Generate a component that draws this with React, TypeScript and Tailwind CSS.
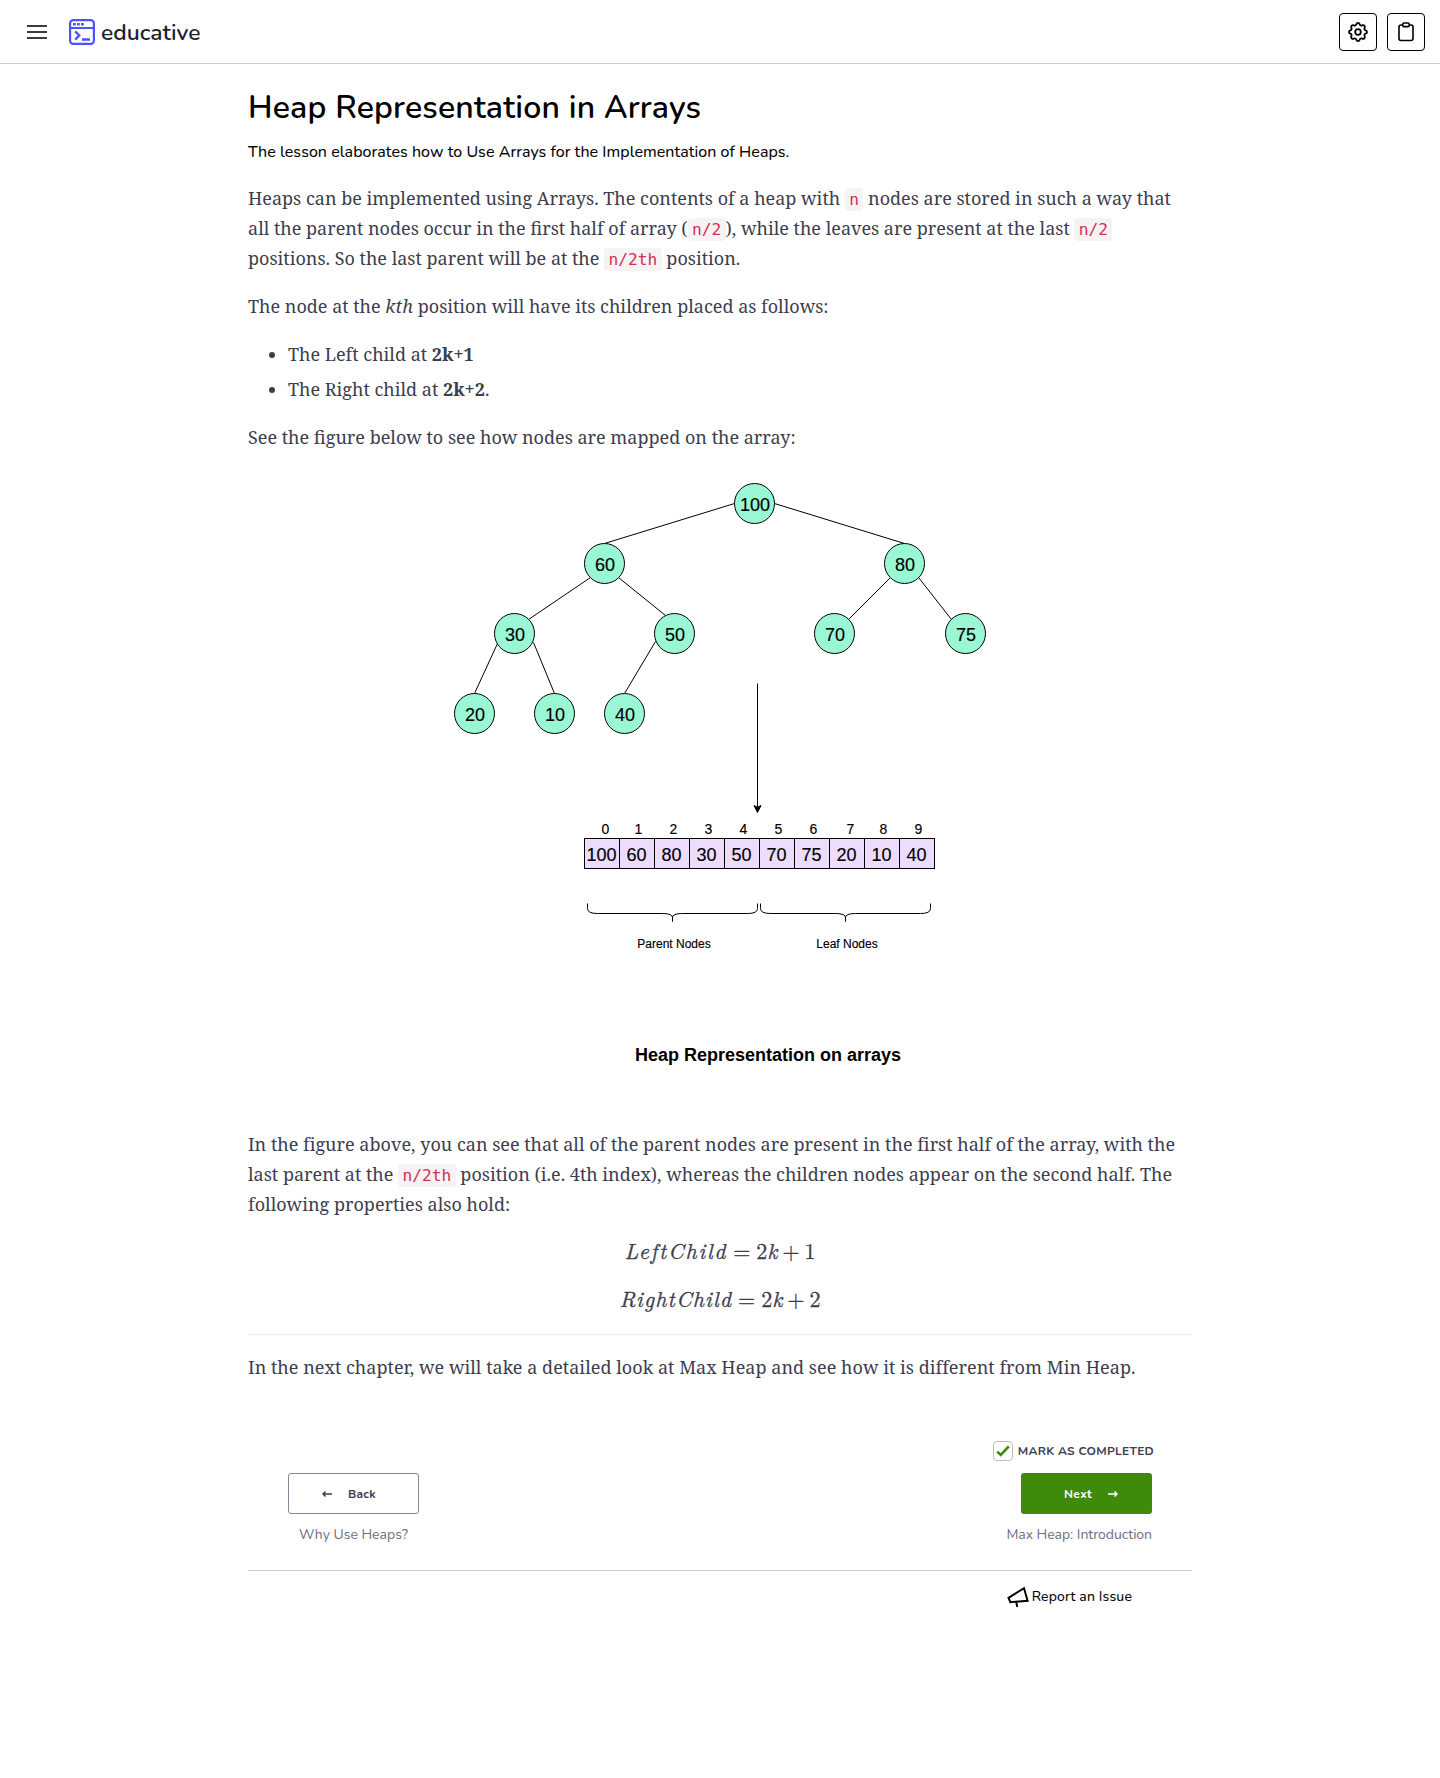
import React from "react";

const nodes: [string, number, number][] = [
  ["100", 754, 503],
  ["60", 604, 563],
  ["80", 904, 563],
  ["30", 514, 633],
  ["50", 674, 633],
  ["70", 834, 633],
  ["75", 965, 633],
  ["20", 474, 713],
  ["10", 554, 713],
  ["40", 624, 713],
];

const edges = [
  [734, 503, 604, 543],
  [774, 503, 904, 543],
  [590, 577, 528, 619],
  [618, 577, 665, 615],
  [890, 577, 848, 619],
  [918, 577, 951, 619],
  [497, 643, 474, 693],
  [533, 642, 554, 693],
  [655, 641, 624, 693],
];

const cells: [string, number][] = [
  ["100", 605],
  ["60", 638],
  ["80", 673],
  ["30", 708],
  ["50", 743],
  ["70", 778],
  ["75", 813],
  ["20", 850],
  ["10", 883],
  ["40", 918],
];

function Brace({ x }: { x: number }) {
  return (
    <path
      d={`M${x} 903v5q0 5 10 5h65q10 0 10 4v4v-4q0-4 10-4h65q10 0 10-5v-5`}
      fill="none"
      stroke="#000"
    />
  );
}

function HeapFigure() {
  return (
    <svg
      className="block h-[630px] w-[944px]"
      viewBox="248 470 944 630"
      fontFamily="'Liberation Sans', Arial, sans-serif"
      textAnchor="middle"
    >
      <g transform="translate(.5 .5)">
        {edges.map(([a, b, c, d], i) => (
          <line key={i} x1={a} y1={b} x2={c} y2={d} stroke="#000" />
        ))}
        {nodes.map(([label, x, y]) => (
          <g key={label}>
            <circle cx={x} cy={y} r="20" fill="#9af7d3" stroke="#000" />
            <text x={x + 0.5} y={y + 7.5} fontSize="18" stroke="#000" strokeWidth=".15">
              {label}
            </text>
          </g>
        ))}
        <path d="M757 683V807" stroke="#000" />
        <path d="M757 812l-3.5-7 3.5 1.75 3.5-1.75z" stroke="#000" />
        {cells.map(([value, ix], i) => (
          <g key={i}>
            <rect x={584 + i * 35} y="838" width="35" height="30" fill="#eedcff" stroke="#000" />
            <text x={601 + i * 35} y="860.5" fontSize="18" stroke="#000" strokeWidth=".15">
              {value}
            </text>
            <text x={ix - 0.2} y="833.5" fontSize="14" stroke="#000" strokeWidth=".15">
              {i}
            </text>
          </g>
        ))}
        <Brace x={587} />
        <Brace x={760} />
        <text x="673.5" y="947.5" fontSize="12" stroke="#000" strokeWidth=".15">
          Parent Nodes
        </text>
        <text x="846.5" y="947.5" fontSize="12" stroke="#000" strokeWidth=".15">
          Leaf Nodes
        </text>
        <text x="767.5" y="1060.5" fontSize="18" fontWeight="700" textLength="266">
          Heap Representation on arrays
        </text>
      </g>
    </svg>
  );
}

function Code({ children }: { children: React.ReactNode }) {
  return (
    <code className="rounded-[4px] bg-[#f7f2f4] px-[4.4px] py-0.5 font-['DejaVu_Sans_Mono',monospace] text-[16.2px] leading-none text-[#d0304f]">
      {children}
    </code>
  );
}

function Formula({ children, value }: { children: React.ReactNode; value: string }) {
  return (
    <p className="h-[30px] text-center font-['Latin_Modern_Roman','Liberation_Serif',serif] text-[22px] leading-[30px] whitespace-nowrap [-webkit-text-stroke:0.3px_#3d3d4e]">
      {children}
      <span className="mx-1.5">=</span>2<i>k</i>
      <span className="mx-[5px]">+</span>
      {value}
    </p>
  );
}

function HeaderButton({ children }: { children: React.ReactNode }) {
  return (
    <button className="flex size-[38px] items-center justify-center rounded-[4px] border border-black">
      {children}
    </button>
  );
}

export default function App() {
  return (
    <div className="min-h-[1778px] bg-white font-[Nunito,sans-serif] text-black">
      <header className="flex h-16 items-center justify-between border-b border-[#cfcfcf] pr-[15px] pl-[27px]">
        <div className="flex items-center">
          <svg className="h-[14px] w-5" viewBox="0 0 20 14" stroke="#3c3c3c" strokeWidth="2">
            <path d="M0 1h20M0 7h20M0 13h20" />
          </svg>
          <svg className="ml-[22px] size-[26px]" viewBox="0 0 26 26" fill="none" stroke="#4f52ff" strokeWidth="2.2">
            <rect x="1.1" y="1.1" width="23.800" height="23.800" rx="3.2" />
            <path d="M1 9h24" strokeWidth="2" />
            <path d="M4 5.2h2.8M8 5.2h2.8M12 5.2h2.8" strokeWidth="2.6" />
            <path d="M6.2 12.4l4 4.1-4 4.1M13 20.5h8" strokeWidth="2.4" />
          </svg>
          <span className="ml-[6px] pt-0.5 text-[22.800px] leading-[30px] font-semibold text-[#1f1f33]">educative</span>
        </div>
        <div className="flex gap-[10px]">
          <HeaderButton>
            <svg className="size-6" viewBox="0 0 24 24" fill="none" stroke="#000" strokeWidth="1.8" strokeLinejoin="round">
              <path d="M10.325 4.317c.426-1.756 2.924-1.756 3.35 0a1.724 1.724 0 002.573 1.066c1.543-.94 3.31.826 2.37 2.37a1.724 1.724 0 001.065 2.572c1.756.426 1.756 2.924 0 3.35a1.724 1.724 0 00-1.066 2.573c.94 1.543-.826 3.31-2.37 2.37a1.724 1.724 0 00-2.572 1.065c-.426 1.756-2.924 1.756-3.35 0a1.724 1.724 0 00-2.573-1.066c-1.543.94-3.31-.826-2.37-2.37a1.724 1.724 0 00-1.065-2.572c-1.756-.426-1.756-2.924 0-3.35a1.724 1.724 0 001.066-2.573c-.94-1.543.826-3.31 2.37-2.37.996.608 2.296.07 2.572-1.065z" />
              <circle cx="12" cy="12" r="2.8" />
            </svg>
          </HeaderButton>
          <HeaderButton>
            <svg className="size-5" viewBox="0 0 20 20" fill="none" stroke="#000" strokeWidth="1.6">
              <path d="M7 3H5a2 2 0 0 0-2 2v11.500a2 2 0 0 0 2 2h10a2 2 0 0 0 2-2V5a2 2 0 0 0-2-2h-2" />
              <rect x="6.800" y="1" width="6.400" height="3.600" rx="1.200" />
            </svg>
          </HeaderButton>
        </div>
      </header>

      <main className="mx-auto w-[944px]">
        <h1 className="pt-[22px] text-[32px] leading-[44px] font-semibold tracking-[0.18px]">
          Heap Representation in Arrays
        </h1>
        <p className="mt-[11px] text-[16px] leading-[22px] tracking-[0.07px] [-webkit-text-stroke:0.1px_#000]">
          The lesson elaborates how to Use Arrays for the Implementation of Heaps.
        </p>

        <article className="mt-5 font-['Noto_Serif',serif] text-[18px] leading-[30px] text-[#3d3d4e]">
          <p>
            Heaps can be implemented using Arrays. The contents of a heap with <Code>n</Code> nodes are stored in such a
            way that all the parent nodes occur in the first half of array (<Code>n/2</Code>), while the leaves are
            present at the last <Code>n/2</Code> positions. So the last parent will be at the <Code>n/2th</Code>{" "}
            position.
          </p>
          <p className="mt-[18px]">
            The node at the <i>kth</i> position will have its children placed as follows:
          </p>
          <ul className="mt-[18px] flex list-disc flex-col gap-[5px] pl-10">
            <li>
              The Left child at <b>2k+1</b>
            </li>
            <li>
              The Right child at <b>2k+2</b>.
            </li>
          </ul>
          <p className="mt-[18px]">See the figure below to see how nodes are mapped on the array:</p>
          <div className="mt-[18px]">
            <HeapFigure />
          </div>
          <p className="mt-[29px] tracking-[0.006px]">
            In the figure above, you can see that all of the parent nodes are present in the first half of the array,
            with the last parent at the <Code>n/2th</Code> position (i.e. 4th index), whereas the children nodes appear
            on the second half. The following properties also hold:
          </p>
          <div className="mt-4 flex flex-col gap-[18px]">
            <Formula value="1">
              <i className="tracking-[1.7px]">LeftChild</i>
            </Formula>
            <Formula value="2">
              <i className="tracking-[1.1px]">RightChild</i>
            </Formula>
          </div>
          <hr className="mt-[21px] border-[#ececec]" />
          <p className="mt-[17px] tracking-[0.028px]">
            In the next chapter, we will take a detailed look at Max Heap and see how it is different from Min Heap.
          </p>
        </article>

        <footer className="mt-[59px]">
          <div className="flex items-center justify-end gap-[5px] pr-[38px]">
            <span className="flex size-5 items-center justify-center rounded-[4px] border border-[#bdbdbd]">
              <svg className="size-[14px]" viewBox="0 0 14 14" fill="none" stroke="#3f8a0b" strokeWidth="2.6">
                <path d="M1.200 7.600l3.600 3.400L12.800 2.400" />
              </svg>
            </span>
            <span className="text-[12px] leading-[20px] font-bold tracking-[0.27px] text-[#3d3d4e]">
              MARK AS COMPLETED
            </span>
          </div>
          <div className="mt-3 flex items-start justify-between pr-10 pl-10 text-[14px] text-[#6f6d80]">
            <div className="flex flex-col items-center">
              <button className="flex h-[41px] w-[131px] items-center justify-center gap-[16px] rounded-[3px] border border-[#87859a] pr-[9px] text-[12px] font-bold tracking-[0.3px] text-[#3d3d4e]">
                <svg className="h-2 w-[10px]" viewBox="0 0 10 8" fill="none" stroke="currentColor" strokeWidth="1.5">
                  <path d="M10 4H1M3.500 1.500L1 4l2.500 2.500" />
                </svg>
                Back
              </button>
              <span className="mt-[11px] leading-[20px]">Why Use Heaps?</span>
            </div>
            <div className="flex flex-col items-end">
              <button className="flex h-[41px] w-[131px] items-center justify-center gap-[16px] rounded-[3px] bg-[#3f8a0b] pl-[9px] text-[12px] font-bold tracking-[0.3px] text-white">
                Next
                <svg className="h-2 w-[10px]" viewBox="0 0 10 8" fill="none" stroke="currentColor" strokeWidth="1.5">
                  <path d="M0 4h9M6.500 1.500L9 4 6.500 6.500" />
                </svg>
              </button>
              <span className="mt-[11px] leading-[20px] tracking-[-0.04px]">Max Heap: Introduction</span>
            </div>
          </div>
          <div className="mt-[25px] flex justify-end border-t border-[#cfcfcf] pt-[15px] pr-[60px]">
            <div className="flex items-center gap-[3px] text-[14px] leading-[20px] tracking-[0.16px] [-webkit-text-stroke:0.1px_#000]">
              <svg className="size-[22px]" viewBox="0 0 22 22" fill="none" stroke="#000" strokeWidth="2">
                <path d="M1.500 11.800L17 2.200l3.600 12.600L3.400 16.200zM9.300 16.200l1 4.800" />
              </svg>
              Report an Issue
            </div>
          </div>
        </footer>
      </main>
    </div>
  );
}
